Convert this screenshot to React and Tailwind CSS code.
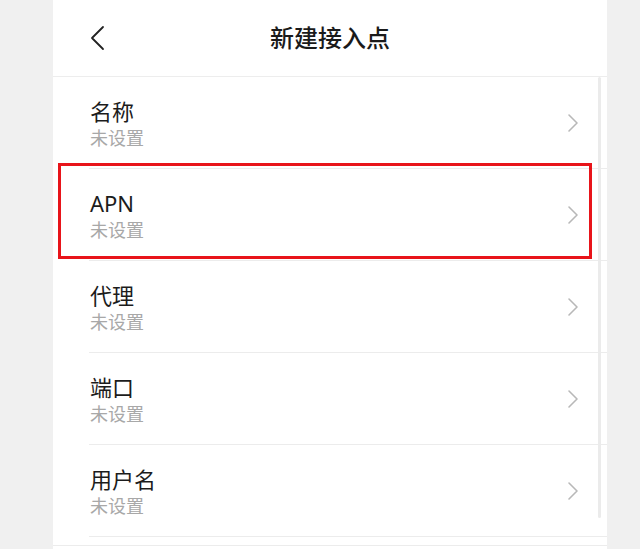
import React from "react";

const rows = ["名称", "APN", "代理", "端口", "用户名"];

function Chevron({ className }) {
  return (
    <svg className={className} width="12" height="20" viewBox="0 0 12 20" fill="none">
      <path d="M2 2 L10 10 L2 18" stroke="currentColor" strokeWidth="1.6" strokeLinecap="round" strokeLinejoin="round" />
    </svg>
  );
}

export default function App() {
  return (
    <div
      className="flex w-[640px] h-[549px] bg-[#f0f0f0] overflow-hidden"
      style={{ fontFamily: '"Noto Sans", "Noto Sans CJK SC", sans-serif' }}
    >
      <div className="w-[53px] shrink-0" />
      <div className="w-[554px] shrink-0 bg-white flex flex-col">
        <div className="h-[77px] shrink-0 flex items-center relative border-b border-[#ededed]">
          <div className="pl-[37px] text-[#222]">
            <svg width="16" height="26" viewBox="0 0 16 26" fill="none">
              <path d="M13 2 L2 13 L13 24" stroke="currentColor" strokeWidth="1.8" strokeLinecap="round" strokeLinejoin="round" />
            </svg>
          </div>
          <div className="absolute left-0 right-0 text-center text-[24px] font-medium text-[#1a1a1a] leading-none pointer-events-none">
            新建接入点
          </div>
        </div>
        <div className="relative flex-1 flex flex-col">
          {rows.map((r) => (
            <div key={r} className="h-[92px] shrink-0 ml-[36px] border-b border-[#ececec] flex items-center justify-between pr-[28px]">
              <div className="pl-[1px] pt-[2px] flex flex-col">
                <div className="text-[22px] leading-[28px] text-[#1c1c1c]">{r}</div>
                <div className="text-[18px] leading-[26px] text-[#a8a8a8]">未设置</div>
              </div>
              <Chevron className="text-[#b8b8b8]" />
            </div>
          ))}
          <div className="h-[9px] border-b border-[#ececec]" />
          <div className="absolute left-[545px] top-0 w-[3px] h-[441px] bg-[#ebebeb] rounded-full" />
          <div className="absolute left-[5px] top-[86px] w-[534px] h-[96px] border-[3px] border-[#e8141a]" />
        </div>
      </div>
      <div className="flex-1" />
    </div>
  );
}
